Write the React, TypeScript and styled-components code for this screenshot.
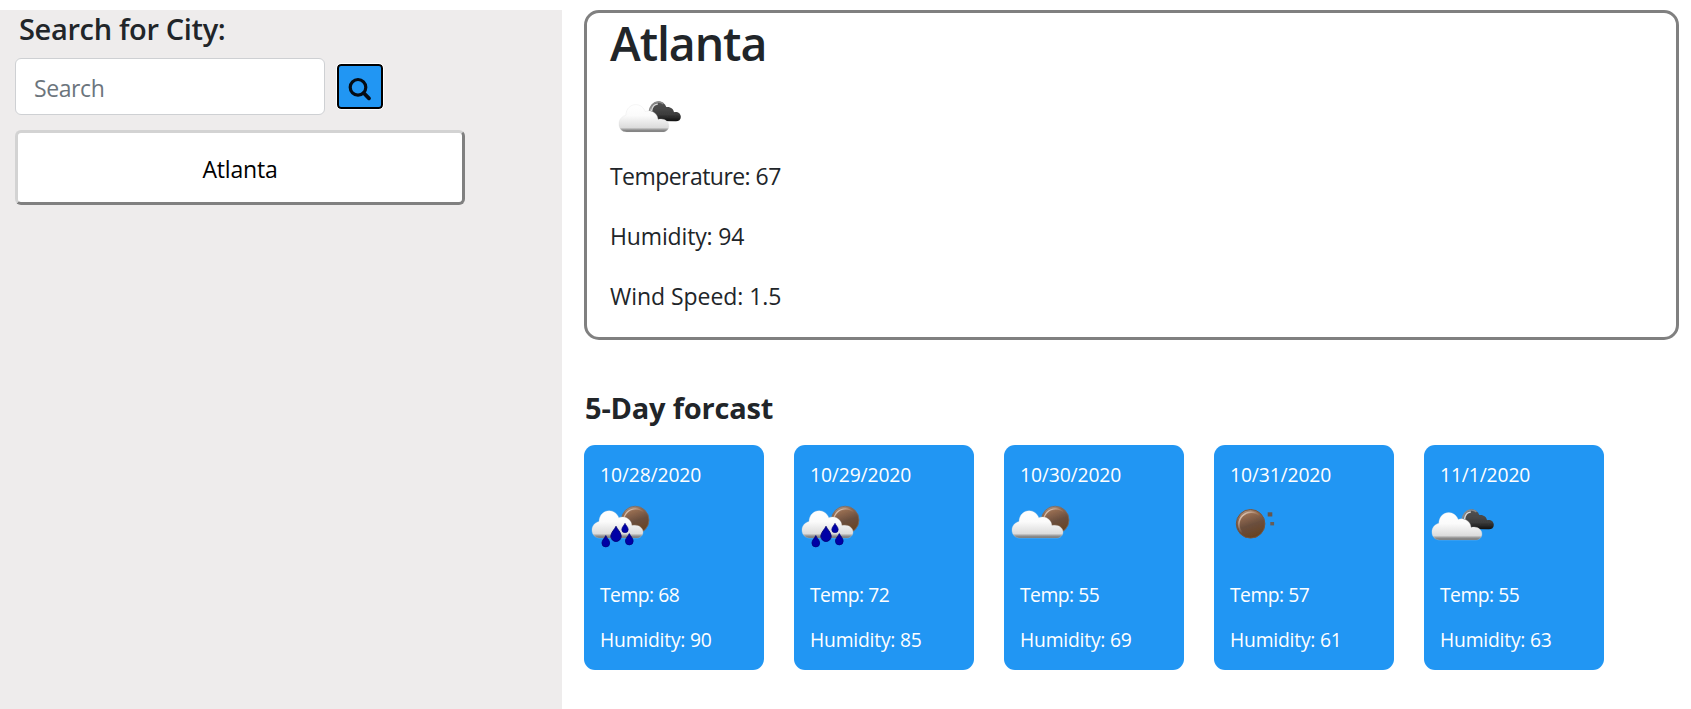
import React from "react";
import styled, { createGlobalStyle } from "styled-components";

const GlobalStyle = createGlobalStyle`
  * { box-sizing: border-box; }
  body {
    margin: 0;
    background: #fff;
    color: #212529;
    font-family: "Open Sans", "Noto Sans", sans-serif;
    font-size: 23px;
    line-height: 36px;
    overflow: hidden;
  }
  h1, h2, h3, p { margin: 0; }
`;

const Page = styled.div`
  display: flex;
  height: 709px;
  padding-top: 10px;
`;

const Sidebar = styled.aside`
  width: 562px;
  flex: none;
  padding: 0 0 0 15px;
  background: #eeecec;
`;

const SearchTitle = styled.h3`
  padding: 1px 0 0 4px;
  font-size: 29px;
  font-weight: 600;
  line-height: 36px;
  letter-spacing: -0.35px;
`;

const SearchRow = styled.form`
  display: flex;
  align-items: center;
  gap: 12px;
  margin-top: 11px;
`;

const SearchInput = styled.input`
  width: 310px;
  height: 57px;
  padding: 3px 18px 0;
  border: 1px solid #ced0d3;
  border-radius: 6px;
  background: #fff;
  font: inherit;
  letter-spacing: -0.4px;
  &::placeholder { color: #6c757d; opacity: 1; }
`;

const SearchButton = styled.button`
  display: flex;
  align-items: center;
  justify-content: center;
  width: 46px;
  height: 45px;
  padding: 4px 0 0;
  border: 2px solid #000;
  border-radius: 4px;
  background: #2196f3;
  outline: 1px solid #fff;
`;

const CityButton = styled.button`
  display: block;
  width: 450px;
  height: 75px;
  margin-top: 15px;
  padding: 3px 0 0;
  border: 3px solid;
  border-color: #d3d3d3 #808080 #808080 #d3d3d3;
  border-radius: 6px;
  background: #fff;
  color: #000;
  font: inherit;
  letter-spacing: -0.2px;
`;

const Main = styled.main`
  flex: 1;
  padding: 0 12px 0 22px;
`;

const Current = styled.section`
  height: 330px;
  padding: 1px 23px;
  border: 3px solid #808080;
  border-radius: 15px;
`;

const CityName = styled.h1`
  font-size: 46.5px;
  font-weight: 600;
  line-height: 58px;
  letter-spacing: -1.1px;
`;

const CurrentIcon = styled.div`
  height: 75px;
  margin: 10px 0 1px 1px;
`;

const Reading = styled.p<{ $spacing?: string }>`
  margin-bottom: 24px;
  letter-spacing: ${(p) => p.$spacing ?? "-0.1px"};
`;

const ForecastTitle = styled.h2`
  margin-top: 50px;
  padding-left: 1px;
  font-size: 29px;
  font-weight: 700;
  line-height: 36px;
  letter-spacing: -0.2px;
`;

const Days = styled.div`
  display: flex;
  gap: 30px;
  margin-top: 19px;
`;

const DayCard = styled.article`
  width: 180px;
  height: 225px;
  padding-top: 15px;
  border-radius: 11px;
  background: #2196f3;
  color: #fff;
  font-size: 19.3px;
  line-height: 30px;
`;

const DayText = styled.p<{ $spacing?: string }>`
  margin-bottom: 15px;
  padding-left: 16px;
  letter-spacing: ${(p) => p.$spacing ?? "-0.2px"};
`;

const DayIcon = styled.div`
  height: 75px;
  margin: -15px 0 15px;
`;

type Kind = "clouds" | "rain" | "partly" | "clear";

const cloudPath =
  "M16 48 C11 48 8 44.5 8 40 C8 35.8 11 32.3 15 31.4 C15.2 25.2 19.5 20.7 25.2 20.7 C29.6 20.7 33.4 23.6 34.8 27.7 C36 27.2 37.5 26.8 39 27 C44 27.3 47.6 31 47.9 35.6 C53.5 34 59 37 59 42 C59 45.6 56.3 48 53 48 Z";

const darkPath =
  "M44 39 C40 37 38.7 33 39.7 28 C40 23 43 19.4 47.5 19.4 C51.5 19.4 54.3 21.7 55.3 25 C59.3 24.3 62.6 26.8 63 30.2 C67 29.5 69.8 31.7 69.8 34.9 C69.8 37.5 67.8 39.3 65 39.3 Z";

const Drop = ({ x, y, s }: { x: number; y: number; s: number }) => (
  <path
    transform={`translate(${x} ${y}) scale(${s})`}
    d="M0 -7.5 C1.2 -4.5 5.2 -1.2 5.2 2.4 A5.2 5.2 0 0 1 -5.2 2.4 C-5.2 -1.2 -1.2 -4.5 0 -7.5Z"
    fill="#0606a6"
    stroke="#07077a"
    strokeWidth="1"
  />
);

function WeatherIcon({ kind }: { kind: Kind }) {
  const id = React.useId();
  const ref = (name: string) => `url(#${id}${name})`;
  return (
    <svg width="75" height="75" viewBox="0 0 75 75" display="block">
      <defs>
        <linearGradient id={`${id}cloud`} x1="0" y1="0" x2="0" y2="1">
          <stop offset="0" stopColor="#fff" />
          <stop offset="0.4" stopColor="#fbfbfb" />
          <stop offset="0.84" stopColor="#dcdcdc" />
          <stop offset="0.91" stopColor="#a0a0a0" />
          <stop offset="1" stopColor="#686868" />
        </linearGradient>
        <linearGradient id={`${id}dark`} x1="0" y1="0" x2="0" y2="1">
          <stop offset="0" stopColor="#555" />
          <stop offset="0.65" stopColor="#3d3d3d" />
          <stop offset="1" stopColor="#111" />
        </linearGradient>
        <linearGradient id={`${id}disc`} x1="0.25" y1="0" x2="0.6" y2="1">
          <stop offset="0" stopColor="#b09c8d" />
          <stop offset="0.22" stopColor="#946b50" />
          <stop offset="0.55" stopColor="#6b4f3e" />
          <stop offset="1" stopColor="#68411f" />
        </linearGradient>
        <linearGradient id={`${id}shine`} x1="0" y1="0" x2="1" y2="1">
          <stop offset="0" stopColor="#fff0e5" />
          <stop offset="0.5" stopColor="#cba78d" stopOpacity="0" />
        </linearGradient>
        <filter id={`${id}soft`} x="-10%" y="-10%" width="120%" height="120%">
          <feGaussianBlur stdDeviation="0.6" />
        </filter>
      </defs>
      <g filter={ref("soft")}>
        {(kind === "rain" || kind === "partly") && (
          <>
            <circle cx="51.2" cy="30" r="13.8" fill={ref("disc")} stroke="#786b62" strokeWidth="0.8" />
            <circle cx="51.5" cy="30.6" r="11.7" fill="none" stroke={ref("shine")} strokeWidth="1.3" />
          </>
        )}
        {kind === "clear" && (
          <>
            <circle cx="36.6" cy="33.8" r="14.3" fill={ref("disc")} stroke="#76543c" strokeWidth="1" />
            <circle cx="37.2" cy="34.5" r="12.3" fill="none" stroke={ref("shine")} strokeWidth="1.6" />
            <rect x="53.7" y="22.3" width="4.6" height="4.2" fill="#67564b" />
            <rect x="56.3" y="32" width="3.8" height="3.4" fill="#675d55" />
          </>
        )}
        {kind === "clouds" && (
          <>
            <path d={darkPath} fill={ref("dark")} />
            <path d="M38 31 C38.6 24.5 42.3 20 47.5 20 C49.5 20 51.2 20.7 52.5 21.8" fill="none" stroke="#8a8a8a" strokeWidth="1.6" />
            <path d="M40.6 29 C41 25.2 43.4 22.4 46.8 22.1" fill="none" stroke="#d6d6d6" strokeWidth="1.5" />
          </>
        )}
        <g transform={kind === "clouds" ? "translate(.1 1.9) scale(.98 1)" : undefined}>
          {kind !== "clear" && <path d={cloudPath} fill={ref("cloud")} stroke="#dedede" strokeWidth="0.3" />}
        </g>
        {kind === "rain" && (
          <>
            <Drop x={21.8} y={51.2} s={0.75} />
            <Drop x={32} y={43.8} s={1} />
            <Drop x={41} y={38} s={0.62} />
            <Drop x={45.3} y={49.2} s={0.75} />
          </>
        )}
      </g>
    </svg>
  );
}

const days: { date: string; kind: Kind; temp: number; humidity: number }[] = [
  { date: "10/28/2020", kind: "rain", temp: 68, humidity: 90 },
  { date: "10/29/2020", kind: "rain", temp: 72, humidity: 85 },
  { date: "10/30/2020", kind: "partly", temp: 55, humidity: 69 },
  { date: "10/31/2020", kind: "clear", temp: 57, humidity: 61 },
  { date: "11/1/2020", kind: "clouds", temp: 55, humidity: 63 },
];

export default function App() {
  return (
    <>
      <GlobalStyle />
      <Page>
        <Sidebar>
          <SearchTitle>Search for City:</SearchTitle>
          <SearchRow>
            <SearchInput placeholder="Search" />
            <SearchButton type="button" aria-label="Search">
              <svg width="24" height="24" viewBox="0 0 24 24" fill="none" stroke="#050c14">
                <circle cx="10" cy="10.3" r="7.8" strokeWidth="3.2" />
                <path d="M15.7 16 L21 21.3" strokeWidth="3.8" strokeLinecap="round" />
              </svg>
            </SearchButton>
          </SearchRow>
          <CityButton>Atlanta</CityButton>
        </Sidebar>
        <Main>
          <Current>
            <CityName>Atlanta</CityName>
            <CurrentIcon>
              <WeatherIcon kind="clouds" />
            </CurrentIcon>
            <Reading $spacing="-0.55px">Temperature: 67</Reading>
            <Reading $spacing="-0.15px">Humidity: 94</Reading>
            <Reading $spacing="-0.05px">Wind Speed: 1.5</Reading>
          </Current>
          <ForecastTitle>5-Day forcast</ForecastTitle>
          <Days>
            {days.map((d) => (
              <DayCard key={d.date}>
                <DayText $spacing="-0.12px">{d.date}</DayText>
                <DayIcon>
                  <WeatherIcon kind={d.kind} />
                </DayIcon>
                <DayText $spacing="-0.5px">Temp: {d.temp}</DayText>
                <DayText>Humidity: {d.humidity}</DayText>
              </DayCard>
            ))}
          </Days>
        </Main>
      </Page>
    </>
  );
}
